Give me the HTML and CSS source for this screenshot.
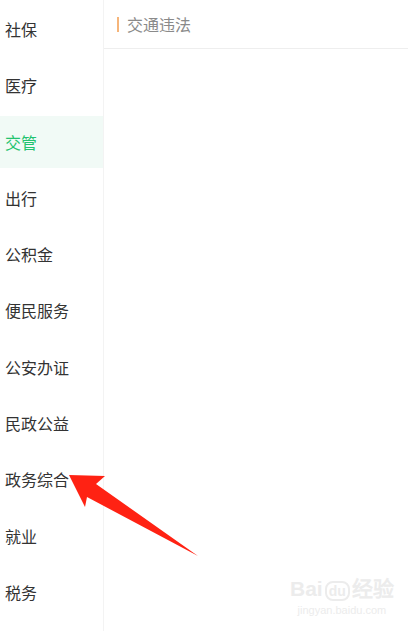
FILE: index.html
```html
<!DOCTYPE html>
<html lang="zh-CN">
<head>
    <meta charset="UTF-8">
    <meta name="viewport" content="width=device-width, initial-scale=1.0">
    <title>办事分类</title>
    <link rel="stylesheet" href="styles.css">
</head>
<body>
    <div class="page">
        <ul class="side-menu">
            <li class="menu-item">社保</li>
            <li class="menu-item">医疗</li>
            <li class="menu-item active">交管</li>
            <li class="menu-item">出行</li>
            <li class="menu-item">公积金</li>
            <li class="menu-item">便民服务</li>
            <li class="menu-item">公安办证</li>
            <li class="menu-item">民政公益</li>
            <li class="menu-item">政务综合</li>
            <li class="menu-item">就业</li>
            <li class="menu-item">税务</li>
        </ul>
        <div class="content">
            <div class="section-title"><span class="title-bar"></span>交通违法</div>
        </div>
    </div>

    <!-- 标注箭头 -->
    <svg class="arrow" width="408" height="631" viewBox="0 0 408 631">
        <polygon points="69,475 105,476 96,484 198,556 87,497 85,507" fill="#ff2213"/>
    </svg>

    <div class="watermark">
        <div class="wm-logo">Bai<span class="wm-du">du</span>经验</div>
        <div class="wm-url">jingyan.baidu.com</div>
    </div>
</body>
</html>
```

FILE: styles.css
```css
body {
    margin: 0;
    padding: 0;
    font-family: "Noto Sans CJK SC", "Noto Sans", sans-serif;
    background-color: #fff;
    width: 408px;
    height: 631px;
    overflow: hidden;
    position: relative;
}

.page {
    display: flex;
    height: 631px;
}

.side-menu {
    list-style: none;
    margin: 0;
    padding: 3px 0 0 0;
    width: 103px;
    border-right: 1px solid #f3f3f3;
    display: flex;
    flex-direction: column;
    gap: 4.3px;
}
.menu-item {
    height: 52px;
    line-height: 52px;
    padding-left: 5px;
    font-size: 16px;
    color: #333;
}
.menu-item.active {
    background-color: #f1faf6;
    color: #22c36f;
}

.content {
    flex: 1;
}
.section-title {
    height: 48px;
    border-bottom: 1px solid #eeeeee;
    display: flex;
    align-items: center;
    padding-left: 13px;
    font-size: 16px;
    color: #8a8a8a;
}
.title-bar {
    width: 2px;
    height: 15px;
    background-color: #f6b57a;
    margin-right: 8px;
}

.arrow {
    position: absolute;
    left: 0;
    top: 0;
    pointer-events: none;
}

.watermark {
    position: absolute;
    left: 290px;
    top: 577px;
    color: #ececec;
    font-family: "Liberation Sans", sans-serif;
    text-align: center;
}
.wm-logo {
    font-size: 21px;
    font-weight: bold;
    line-height: 24px;
}
.wm-du {
    font-size: 14px;
    border: 2px solid #ececec;
    border-radius: 8px;
    padding: 0 2px;
    margin: 0 2px;
}
.wm-url {
    font-size: 11px;
    line-height: 14px;
}
```
